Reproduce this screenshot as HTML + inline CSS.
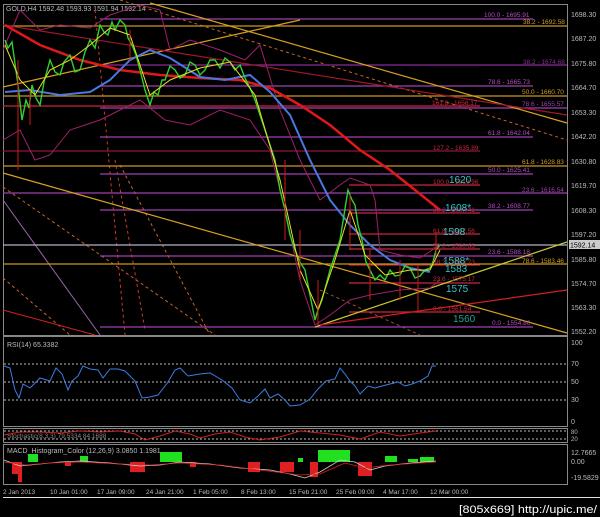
<!DOCTYPE html>
<html><head><meta charset="utf-8"><style>
html,body{margin:0;padding:0;background:#000;width:600px;height:517px;overflow:hidden}
svg{display:block}
text{font-family:"Liberation Sans",sans-serif}
</style></head><body>
<svg width="600" height="517" viewBox="0 0 600 517" xmlns="http://www.w3.org/2000/svg">
<rect width="600" height="517" fill="#000"/>
<rect x="3.5" y="4.5" width="564" height="331" fill="none" stroke="#888" stroke-width="1"/>
<g font-size="7" fill="#bbb">
<text x="571" y="17">1698.30</text><text x="571" y="41">1687.20</text><text x="571" y="66">1675.80</text>
<text x="571" y="90">1664.70</text><text x="571" y="115">1653.30</text><text x="571" y="139">1642.20</text>
<text x="571" y="164">1630.80</text><text x="571" y="188">1619.70</text><text x="571" y="213">1608.30</text>
<text x="571" y="237">1597.20</text><text x="571" y="262">1585.80</text><text x="571" y="286">1574.70</text>
<text x="571" y="310">1563.30</text><text x="571" y="334">1552.20</text>
</g>
<rect x="569" y="240" width="31" height="9" fill="#ccc"/>
<text x="570" y="247.5" font-size="7" fill="#000">1592.14</text>
<text x="6" y="11" font-size="7" fill="#bbb">GOLD,H4  1592.48 1593.93 1591.94 1592.14</text>
<g fill="none" stroke-dasharray="3,3" stroke-width="1">
<line x1="120" y1="0" x2="567" y2="140" stroke="#c86428"/>
<line x1="3" y1="187" x2="215" y2="335" stroke="#c86428"/>
<line x1="3" y1="278" x2="70" y2="335" stroke="#c86428"/>
<line x1="115" y1="160" x2="145" y2="330" stroke="#c83c28"/>
<line x1="95" y1="10" x2="125" y2="335" stroke="#c83c28"/>
<line x1="120" y1="165" x2="210" y2="335" stroke="#c86428"/>
<line x1="320" y1="290" x2="420" y2="335" stroke="#a05028"/>
</g>
<line x1="3" y1="200" x2="100" y2="335" stroke="#9a6ab0" stroke-width="1"/>
<line x1="3" y1="310" x2="95" y2="335" stroke="#d02020" stroke-width="1"/>
<g stroke-width="1.2">
<line x1="100" y1="19" x2="533" y2="19" stroke="#a040b0"/>
<line x1="3" y1="26" x2="567" y2="26" stroke="#c8961e"/>
<line x1="100" y1="65" x2="567" y2="65" stroke="#8a2a9a"/>
<line x1="100" y1="86" x2="533" y2="86" stroke="#a040b0"/>
<line x1="3" y1="96" x2="567" y2="96" stroke="#c8961e"/>
<line x1="3" y1="106" x2="480" y2="106" stroke="#c8283c"/>
<line x1="100" y1="108" x2="567" y2="108" stroke="#a040b0"/>
<line x1="100" y1="137" x2="533" y2="137" stroke="#a040b0"/>
<line x1="3" y1="151" x2="480" y2="151" stroke="#8a1a3a"/>
<line x1="3" y1="166" x2="567" y2="166" stroke="#c8961e"/>
<line x1="100" y1="174" x2="533" y2="174" stroke="#a040b0"/>
<line x1="349" y1="185" x2="480" y2="185" stroke="#c8283c"/>
<line x1="3" y1="193" x2="567" y2="193" stroke="#a040b0"/>
<line x1="100" y1="210" x2="533" y2="210" stroke="#a040b0"/>
<line x1="349" y1="213" x2="480" y2="213" stroke="#c8283c"/>
<line x1="349" y1="234" x2="480" y2="234" stroke="#c8283c"/>
<line x1="3" y1="245" x2="567" y2="245" stroke="#b0b0c8"/>
<line x1="349" y1="249" x2="480" y2="249" stroke="#c8283c"/>
<line x1="100" y1="256" x2="533" y2="256" stroke="#a040b0"/>
<line x1="349" y1="265" x2="480" y2="265" stroke="#c8283c"/>
<line x1="3" y1="264" x2="567" y2="264" stroke="#c8961e"/>
<line x1="349" y1="283" x2="480" y2="283" stroke="#c8283c"/>
<line x1="349" y1="312" x2="480" y2="312" stroke="#c8283c"/>
<line x1="100" y1="327" x2="533" y2="327" stroke="#a040b0"/>
</g>
<g fill="none" stroke-width="1.2">
<line x1="150" y1="3" x2="567" y2="123" stroke="#d8a020"/>
<line x1="3" y1="87" x2="300" y2="20" stroke="#d8a020"/>
<line x1="3" y1="173" x2="567" y2="333" stroke="#d8a020"/>
<line x1="315" y1="327" x2="567" y2="242" stroke="#c8c830"/>
<line x1="320" y1="325" x2="567" y2="290" stroke="#d02020"/>
<line x1="3" y1="25" x2="567" y2="115" stroke="#a01828"/>
</g>
<g fill="none" stroke="#a0206a" stroke-width="1">
<polyline points="3,50 20,10 40,30 60,25 90,28 110,15 140,5 160,10 170,50 190,40 220,50 245,60 260,45 280,110 300,160 320,200 340,185 350,178 370,185 375,200 380,250 400,255 420,258 440,245"/>
<polyline points="3,140 20,130 35,160 50,155 70,130 100,120 120,110 140,100 165,120 190,125 220,110 250,120 270,150 285,210 300,280 315,325 330,315 350,300 370,295 400,290 430,288 440,280"/>
</g>
<polyline fill="none" stroke="#e01818" stroke-width="2.5" points="5,25 40,45 80,60 120,70 160,75 200,78 240,80 270,88 300,105 330,125 360,150 390,170 415,190 440,210"/>
<polyline fill="none" stroke="#4a78e0" stroke-width="2" points="5,92 30,90 60,95 90,92 110,80 130,60 150,50 170,58 200,77 225,80 250,75 270,92 290,115 310,160 330,200 350,225 370,245 390,260 410,268 430,272"/>
<polyline fill="none" stroke="#30d030" stroke-width="1.4" points="5,40 8,48 12,42 18,85 22,120 26,100 29,108 32,85 36,98 40,105 44,82 50,60 55,72 60,75 64,62 70,55 75,72 80,70 85,52 90,40 95,48 100,25 104,32 108,35 112,22 115,30 120,20 125,25 128,38 132,45 136,55 140,70 145,90 150,105 154,92 158,95 162,80 165,80 170,66 175,70 180,78 185,75 190,62 195,65 200,75 205,70 210,60 215,60 220,68 225,58 230,62 235,70 240,65 245,78 250,88 255,100 260,115 265,130 270,145 275,160 280,190 285,210 290,235 295,250 300,262 305,270 310,295 315,320 318,310 322,300 326,285 330,270 335,255 340,240 344,215 348,190 352,200 355,205 358,225 362,240 366,262 370,270 375,280 380,275 385,280 390,270 395,276 400,275 405,266 410,268 415,278 420,276 425,270 430,268 433,262 436,250 440,245"/>
<polyline fill="none" stroke="#e8e020" stroke-width="1" points="5,45 20,80 35,95 50,70 70,60 90,45 110,28 130,35 150,95 170,80 200,68 230,62 255,95 280,180 300,270 318,310 335,260 350,210 365,255 385,275 410,270 430,270 440,250"/>
<g stroke="#d01818" stroke-width="1">
<line x1="18" y1="60" x2="18" y2="170"/><line x1="30" y1="90" x2="30" y2="125"/><line x1="130" y1="30" x2="130" y2="60"/>
<line x1="285" y1="160" x2="285" y2="240"/><line x1="300" y1="230" x2="300" y2="280"/><line x1="318" y1="280" x2="318" y2="325"/>
<line x1="350" y1="195" x2="350" y2="250"/><line x1="370" y1="250" x2="370" y2="300"/><line x1="400" y1="260" x2="400" y2="300"/>
<line x1="418" y1="265" x2="418" y2="313"/><line x1="436" y1="232" x2="436" y2="255"/>
</g>
<g font-size="6.5">
<text x="484" y="17" fill="#b050c0">100.0 - 1695.91</text>
<text x="523" y="24" fill="#d0a020">38.2 - 1692.58</text>
<text x="523" y="64" fill="#8a2a9a">38.2 - 1674.68</text>
<text x="488" y="84" fill="#b050c0">78.6 - 1665.73</text>
<text x="522" y="94" fill="#d0a020">50.0 - 1660.70</text>
<text x="432" y="105" fill="#d0283c">161.8 - 1656.17</text>
<text x="522" y="106" fill="#a040b0">78.6 - 1655.57</text>
<text x="488" y="135" fill="#b050c0">61.8 - 1642.04</text>
<text x="433" y="150" fill="#c8283c">127.2 - 1635.89</text>
<text x="522" y="164" fill="#d0a020">61.8 - 1628.83</text>
<text x="488" y="172" fill="#b050c0">50.0 - 1625.41</text>
<text x="433" y="184" fill="#c8283c">100.0 - 1619.96</text>
<text x="522" y="192" fill="#a040b0">23.6 - 1616.54</text>
<text x="488" y="208" fill="#b050c0">38.2 - 1608.77</text>
<text x="433" y="212" fill="#c8283c">38.2 - 1607.41</text>
<text x="433" y="233" fill="#c8283c">61.8 - 1597.56</text>
<text x="433" y="248" fill="#c8283c">50.0 - 1590.66</text>
<text x="488" y="254" fill="#b050c0">23.6 - 1588.18</text>
<text x="522" y="263" fill="#d0a020">78.6 - 1583.46</text>
<text x="433" y="264" fill="#c8283c">38.2 - 1583.73</text>
<text x="433" y="281" fill="#c8283c">23.6 - 1575.17</text>
<text x="433" y="311" fill="#c8283c">0.0 - 1561.54</text>
<text x="492" y="325" fill="#b050c0">0.0 - 1554.80</text>
</g>
<g font-size="10" fill="#30c8c8">
<text x="449" y="183">1620</text><text x="445" y="211">1608*</text><text x="443" y="235">1598</text>
<text x="443" y="264">1588*</text><text x="445" y="272">1583</text><text x="446" y="292">1575</text>
<text x="453" y="322" fill="#20a090">1560</text>
</g>
<rect x="3.5" y="336.5" width="564" height="90" fill="none" stroke="#888"/>
<text x="7" y="347" font-size="7" fill="#bbb">RSI(14) 65.3382</text>
<g stroke="#bbb" stroke-dasharray="2,2" stroke-width="1">
<line x1="4" y1="364" x2="567" y2="364"/><line x1="4" y1="382" x2="567" y2="382"/><line x1="4" y1="400" x2="567" y2="400"/>
</g>
<g font-size="7" fill="#bbb"><text x="571" y="345">100</text><text x="571" y="366">70</text><text x="571" y="384">50</text><text x="571" y="402">30</text><text x="571" y="424">0</text></g>
<polyline fill="none" stroke="#3c7ce0" stroke-width="1" points="4,366 10,368 15,390 19,398 23,384 30,388 40,378 50,381 56,368 62,374 68,390 72,381 78,376 83,366 90,369 98,370 103,378 110,369 118,369 125,371 135,381 142,398 150,397 158,395 168,382 175,370 180,368 188,376 200,374 210,373 222,380 232,388 240,400 250,403 258,396 265,389 270,398 278,394 285,400 290,406 300,405 310,399 318,389 326,381 335,379 340,368 345,374 350,381 355,386 360,394 368,386 375,388 382,386 390,384 398,382 405,386 412,384 420,381 428,376 432,366 436,366"/>
<rect x="3.5" y="428.5" width="564" height="14" fill="none" stroke="#888"/>
<g stroke="#bbb" stroke-dasharray="2,2"><line x1="4" y1="431" x2="567" y2="431"/><line x1="4" y1="439" x2="567" y2="439"/></g>
<text x="7" y="438" font-size="6.5" fill="#888">Stochastic(8,3,3) 79.5334 84.1688</text>
<polyline fill="none" stroke="#d02020" stroke-width="1" points="4,435 20,432 40,432 60,433 80,431 100,432 120,431 135,434 145,440 160,436 175,431 190,434 200,438 215,434 230,432 245,437 260,440 280,437 300,431 320,433 340,435 360,439 380,432 400,436 420,433 436,431"/>
<g font-size="6" fill="#bbb"><text x="571" y="434">80</text><text x="571" y="441">20</text></g>
<rect x="3.5" y="444.5" width="564" height="40" fill="none" stroke="#888"/>
<text x="7" y="453" font-size="7" fill="#bbb">MACD_Histogram_Color (12,26,9) 3.0850 1.1981</text>
<g fill="#20e020">
<rect x="28" y="454" width="10" height="8"/><rect x="80" y="456" width="8" height="6"/><rect x="160" y="452" width="22" height="10"/><rect x="298" y="458" width="5" height="4"/><rect x="318" y="450" width="32" height="12"/><rect x="385" y="456" width="12" height="6"/><rect x="408" y="459" width="10" height="3"/><rect x="420" y="457" width="14" height="5"/>
</g>
<g fill="#e02020">
<rect x="12" y="462" width="10" height="12"/><rect x="18" y="462" width="4" height="20"/><rect x="65" y="462" width="6" height="4"/><rect x="130" y="462" width="15" height="10"/><rect x="190" y="462" width="6" height="5"/><rect x="248" y="462" width="12" height="10"/><rect x="280" y="462" width="14" height="10"/><rect x="310" y="462" width="8" height="15"/><rect x="358" y="462" width="14" height="14"/>
</g>
<polyline fill="none" stroke="#d0d0d0" stroke-width="0.8" points="4,460 20,466 40,464 60,462 80,461 110,463 140,466 160,465 180,462 210,464 240,468 270,470 290,474 305,478 320,472 340,460 355,462 370,470 385,466 410,463 436,461"/>
<polyline fill="none" stroke="#e02020" stroke-width="0.8" points="4,462 25,465 50,463 80,462 120,464 150,465 180,463 220,465 260,470 300,475 320,474 345,463 365,468 390,465 436,462"/>
<g font-size="7" fill="#bbb"><text x="571" y="455">12.7665</text><text x="571" y="464">0.00</text><text x="571" y="480">-19.5829</text></g>
<g font-size="6.5" fill="#bbb">
<text x="3" y="494">2 Jan 2013</text><text x="50" y="494">10 Jan 01:00</text><text x="97" y="494">17 Jan 09:00</text>
<text x="146" y="494">24 Jan 21:00</text><text x="193" y="494">1 Feb 05:00</text><text x="241" y="494">8 Feb 13:00</text>
<text x="289" y="494">15 Feb 21:00</text><text x="336" y="494">25 Feb 09:00</text><text x="383" y="494">4 Mar 17:00</text>
<text x="430" y="494">12 Mar 00:00</text>
</g>
<line x1="3" y1="497.5" x2="600" y2="497.5" stroke="#ddd" stroke-width="1"/>
<text x="459" y="513" font-size="11" fill="#fff" textLength="138" lengthAdjust="spacingAndGlyphs">[805x669] http://upic.me/</text>
</svg>
</body></html>
